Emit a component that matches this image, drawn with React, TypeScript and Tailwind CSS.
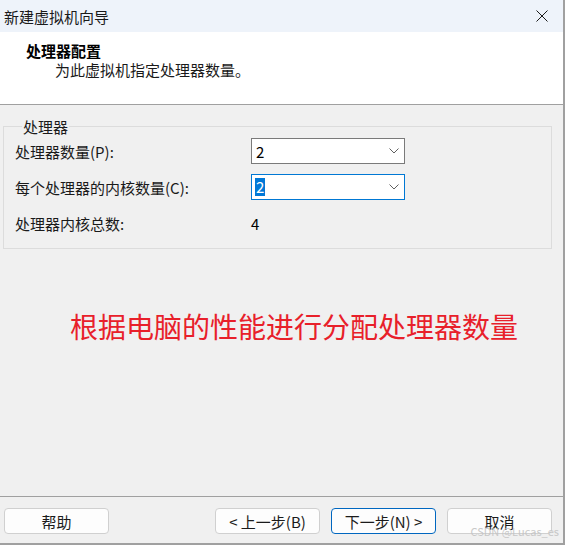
const font = { fontFamily: '"Noto Sans CJK SC", "Noto Sans", sans-serif' };

const Combo = ({ value, focused }: { value: string; focused?: boolean }) => (
  <div
    className={`w-[154px] h-[26px] bg-white border flex items-center justify-between pl-[4px] pr-[5px] ${
      focused ? "border-[#0078d4]" : "border-[#7a7a7a]"
    }`}
  >
    {focused ? (
      <span className="bg-[#0078d7] text-white leading-[18px] px-[1px] -ml-[1px]">{value}</span>
    ) : (
      <span className="text-black">{value}</span>
    )}
    <svg width="10" height="6" viewBox="0 0 10 6" className="text-[#606060]">
      <path d="M0.5 0.5 L5 5 L9.5 0.5" fill="none" stroke="currentColor" strokeWidth="1" />
    </svg>
  </div>
);

const Button = ({ label, primary }: { label: string; primary?: boolean }) => (
  <button
    className={`w-[105px] h-[26px] rounded-[4px] bg-[#fdfdfd] border text-[15px] text-[#1b1b1b] flex items-center justify-center ${
      primary ? "border-[#0067c0]" : "border-[#d0d0d0]"
    }`}
  >
    {label}
  </button>
);

export default function App() {
  return (
    <div
      style={font}
      className="relative w-[565px] h-[545px] bg-[#f0f0f0] border-r-2 border-b-2 border-[#a0a0a0] flex flex-col text-[15px] text-[#1a1a1a] leading-[19px]"
    >
      {/* title bar */}
      <div className="h-[32px] bg-[#eef3fa] flex items-center justify-between pl-[4px] pr-[15px]">
        <span>新建虚拟机向导</span>
        <svg width="12" height="12" viewBox="0 0 12 12">
          <path d="M0.5 0.5 L11.5 11.5 M11.5 0.5 L0.5 11.5" stroke="#1a1a1a" strokeWidth="1" />
        </svg>
      </div>

      {/* header */}
      <div className="h-[73px] bg-white border-b border-[#a0a0a0] pt-[9px]">
        <div className="pl-[26px] font-bold text-black">处理器配置</div>
        <div className="pl-[55px]">为此虚拟机指定处理器数量。</div>
      </div>

      {/* body */}
      <div className="flex-1 flex flex-col">
        <fieldset className="mx-[3px] mt-[12px] w-[549px] border border-[#dcdcdc] pl-[11px] pb-[12px]">
          <legend className="ml-[7px] px-[1px]">处理器</legend>
          <div className="grid grid-cols-[236px_154px] gap-y-[10px] items-center mt-[2px]">
            <span>处理器数量(P):</span>
            <Combo value="2" />
            <span>每个处理器的内核数量(C):</span>
            <Combo value="2" focused />
            <span className="h-[26px] flex items-center">处理器内核总数:</span>
            <span className="text-black">4</span>
          </div>
        </fieldset>

        <div className="mt-[59px] pl-[70px] text-[28px] leading-[36px] text-[#e8202a]">
          根据电脑的性能进行分配处理器数量
        </div>
      </div>

      {/* footer */}
      <div className="border-t border-[#a0a0a0] pt-[11px] pb-[9px] pl-[4px] pr-[11px] flex items-center">
        <Button label="帮助" />
        <div className="ml-auto flex gap-[11px]">
          <Button label="< 上一步(B)" />
          <Button label="下一步(N) >" primary />
          <Button label="取消" />
        </div>
      </div>

      <span className="absolute right-[4px] bottom-[6px] text-[11px] leading-[12px] text-[#c4c4c4] opacity-90">
        CSDN @Lucas_es
      </span>
    </div>
  );
}
